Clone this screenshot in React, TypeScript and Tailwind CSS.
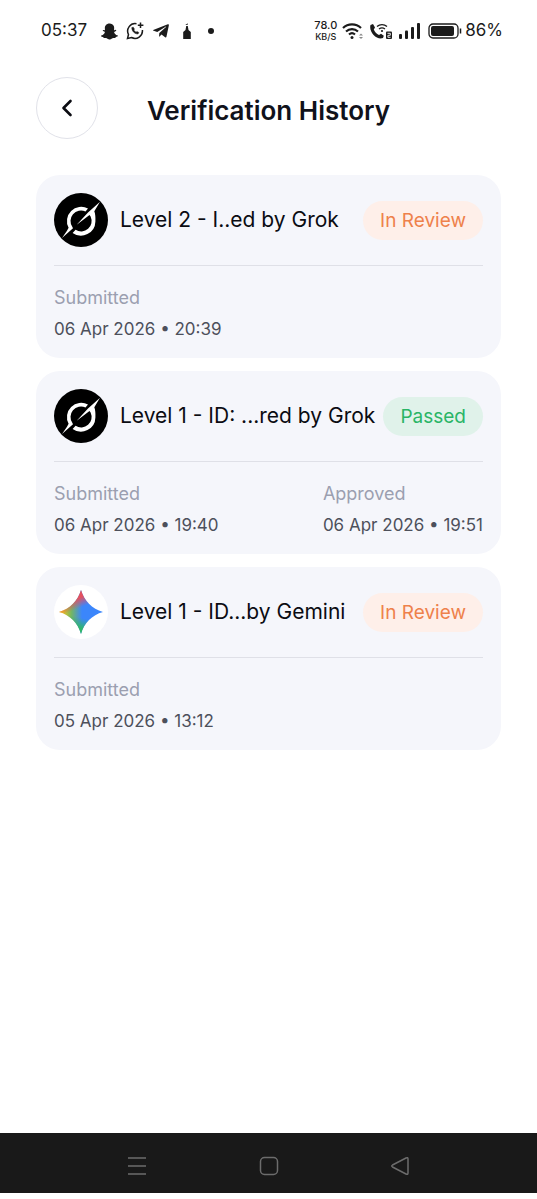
import { ChevronLeft } from "lucide-react";
import { FaSnapchatGhost, FaTelegramPlane } from "react-icons/fa";

type Verification = {
  provider: "grok" | "gemini";
  title: string;
  status: "In Review" | "Passed";
  submitted: string;
  approved?: string;
};

const verifications: Verification[] = [
  { provider: "grok", title: "Level 2 - I..ed by Grok", status: "In Review", submitted: "06 Apr 2026 • 20:39" },
  {
    provider: "grok",
    title: "Level 1 - ID: ...red by Grok",
    status: "Passed",
    submitted: "06 Apr 2026 • 19:40",
    approved: "06 Apr 2026 • 19:51",
  },
  { provider: "gemini", title: "Level 1 - ID...by Gemini", status: "In Review", submitted: "05 Apr 2026 • 13:12" },
];

const GrokLogo = () => (
  <svg viewBox="0 0 54 54" className="size-[54px] shrink-0" aria-hidden="true">
    <circle cx="27" cy="27" r="27" fill="#000" />
    <g fill="#fff">
      <path d="M34 15.500A14.300 14.300 0 0 0 14.600 34.800L13 37.800L8 45L19 35.300L18.400 34A10.500 10.500 0 0 1 31.500 18.500Z" />
      <path d="M22.700 31.700L34 19.500L46 8.800L40.300 18.300C41.300 21 41.600 24 41.400 28.500A14.400 14.400 0 0 1 18.600 39.900L21.600 36.800A10.400 10.400 0 0 0 36.600 23.600L35.500 22Z" />
    </g>
  </svg>
);

const GeminiLogo = () => (
  <svg viewBox="0 0 54 54" className="size-[54px] shrink-0" aria-hidden="true">
    <defs>
      <linearGradient id="gem-base" x1="5" y1="27" x2="28" y2="27" gradientUnits="userSpaceOnUse">
        <stop offset=".15" stopColor="#ecc51c" />
        <stop offset=".55" stopColor="#72b566" />
        <stop offset="1" stopColor="#3b86fb" />
      </linearGradient>
      <linearGradient id="gem-red" x1="23" y1="10" x2="28" y2="22" gradientUnits="userSpaceOnUse">
        <stop offset=".25" stopColor="#e4505f" />
        <stop offset="1" stopColor="#e4505f" stopOpacity="0" />
      </linearGradient>
      <linearGradient id="gem-green" x1="25" y1="46" x2="28" y2="33" gradientUnits="userSpaceOnUse">
        <stop offset=".2" stopColor="#2fb866" />
        <stop offset="1" stopColor="#2fb866" stopOpacity="0" />
      </linearGradient>
    </defs>
    <circle cx="27" cy="27" r="27" fill="#fff" />
    {["url(#gem-base)", "url(#gem-green)", "url(#gem-red)"].map((fill) => (
      <path key={fill} fill={fill} d="M27 5C30 15.500 38 24 49 27C38 30 30 38 27 49C24 38 16 30 5 27C16 24 24 15.500 27 5Z" />
    ))}
  </svg>
);

const StatusBar = () => (
  <div className="flex h-[62px] items-center pl-[41px] pr-[34px] text-[#1b1b1b]">
    <span className="text-[17px]">05:37</span>
    <div className="ml-[14px] flex items-center gap-2">
      <FaSnapchatGhost size={17} />
      <svg viewBox="0 0 18 18" className="size-[18px]" fill="none" stroke="currentColor" strokeWidth="1.5" aria-hidden="true">
        <path d="M10.500 1.700A7.500 7.500 0 0 0 2.500 12.500L1.500 16.500L5.500 15.500A7.500 7.500 0 0 0 16.400 8" />
        <path d="M14.500 .5V6M11.800 3.200H17.400" />
        <path d="M5.800 5.500C5.600 9 8.500 12 12 12L12.800 10.500L11 9.500L10 10.300L7.900 8.200L8.400 7L7.300 5.200Z" fill="currentColor" strokeWidth=".5" />
      </svg>
      <FaTelegramPlane size={18} />
      <svg viewBox="0 0 18 18" className="size-[18px]" fill="currentColor" aria-hidden="true">
        <path d="M7.800 2.200L10 1.500V2.500L7.800 3ZM8.200 4H9.800L10.500 8L12.800 10V17H5.200V10L7.500 8Z" />
      </svg>
      <span className="ml-[4px] size-[6px] rounded-full bg-[#1b1b1b]" />
    </div>
    <div className="ml-auto flex items-center">
      <div className="text-center font-medium">
        <div className="text-[11px] leading-[11px]">78.0</div>
        <div className="text-[9px] leading-[11px]">KB/S</div>
      </div>
      <svg viewBox="0 0 22 18" className="ml-[5px] h-[18px] w-[22px]" fill="none" stroke="currentColor" strokeWidth="2.200" aria-hidden="true">
        <path d="M1 6A13 13 0 0 1 19 6M4 9.500A9 9 0 0 1 16 9.500M7 12.500A4.500 4.500 0 0 1 13 12.500" />
        <circle cx="10" cy="15.500" r="1.500" fill="currentColor" stroke="none" />
        <path d="M17 13.500H21L19 11.500ZM17 15H21L19 17Z" fill="#888" stroke="none" />
      </svg>
      <svg viewBox="0 0 24 18" className="ml-[5px] h-[18px] w-[24px]" fill="currentColor" aria-hidden="true">
        <path d="M1.500 3L4 2L6 5.500L4.800 7.500C5.800 10 7.500 11.800 10 13L12 11.800L14.800 13.800L14 16C8 18.500 -.5 10 1.500 3Z" />
        <path d="M8 4.500A7.500 7.500 0 0 1 18 4.500M10 7A5 5 0 0 1 16 7" fill="none" stroke="currentColor" strokeWidth="1.300" />
        <circle cx="13" cy="9" r="1.100" />
        <rect x="17" y="9.500" width="6" height="7.500" rx="1" />
        <path d="M18.500 11.300H21.300V13.300H18.900V15.300H21.500" fill="none" stroke="#fff" strokeWidth=".9" />
      </svg>
      <svg viewBox="0 0 22 16" className="ml-[6px] h-[16px] w-[22px]" fill="currentColor" aria-hidden="true">
        <rect x="0" y="11" width="3" height="5" rx="1" />
        <rect x="6" y="7.500" width="3" height="8.500" rx="1" />
        <rect x="12" y="4" width="3" height="12" rx="1" />
        <rect x="18" y="0" width="3" height="16" rx="1" />
      </svg>
      <svg viewBox="0 0 34 16" className="ml-[7px] h-[16px] w-[34px]" fill="none" stroke="currentColor" aria-hidden="true">
        <rect x="1" y="1" width="29" height="14" rx="4" strokeWidth="1.300" />
        <rect x="3" y="3" width="23" height="10" rx="2" fill="currentColor" stroke="none" />
        <path d="M32.500 5.500V10.500" strokeWidth="1.500" />
      </svg>
      <span className="ml-[3px] text-[17px]">86%</span>
    </div>
  </div>
);

const DateField = ({ label, value }: { label: string; value: string }) => (
  <div>
    <dt className="text-lg leading-6 text-[#9b9fb0]">{label}</dt>
    <dd className="mt-[7px] text-[17px] leading-6 text-[#4d505b]">{value}</dd>
  </div>
);

const VerificationCard = ({ item }: { item: Verification }) => (
  <li className="rounded-3xl bg-[#f5f6fb] px-[18px] pb-[17px] pt-[18px]">
    <div className="flex items-center pb-[18px]">
      {item.provider === "grok" ? <GrokLogo /> : <GeminiLogo />}
      <h2 className="ml-3 whitespace-nowrap text-[21px] text-[#0b0c12]">{item.title}</h2>
      <span
        className={`ml-auto whitespace-nowrap rounded-full px-[17px] py-[6px] text-[19px] leading-[27px] ${
          item.status === "Passed" ? "bg-[#e0f2ea] text-[#2ab566]" : "bg-[#feefe9] text-[#ee814b]"
        }`}
      >
        {item.status}
      </span>
    </div>
    <dl className="flex justify-between border-t border-[#dfe0e7] pt-5">
      <DateField label="Submitted" value={item.submitted} />
      {item.approved && <DateField label="Approved" value={item.approved} />}
    </dl>
  </li>
);

const NavBar = () => (
  <nav className="mb-[6px] flex h-[60px] items-center justify-between bg-[#191919] px-[125px] pt-[6px] text-[#6c6c6c]">
    <button aria-label="Recent apps">
      <svg viewBox="0 0 24 24" className="size-6" fill="none" stroke="currentColor" strokeWidth="1.500">
        <path d="M3 4H21M3 12H21M3 20H21" />
      </svg>
    </button>
    <button aria-label="Home">
      <svg viewBox="0 0 24 24" className="size-6" fill="none" stroke="currentColor" strokeWidth="1.500">
        <rect x="3.500" y="3.500" width="17" height="17" rx="4" />
      </svg>
    </button>
    <button aria-label="Back">
      <svg viewBox="0 0 24 24" className="size-6" fill="none" stroke="currentColor" strokeWidth="1.500" strokeLinejoin="round">
        <path d="M4.500 11Q3 12 4.500 13L18 20Q20 21 20 19V5Q20 3 18 4Z" />
      </svg>
    </button>
  </nav>
);

const App = () => (
  <div className="flex min-h-screen flex-col bg-white font-['Inter',sans-serif]">
    <StatusBar />
    <header className="mx-9 mt-[15px] grid grid-cols-[62px_1fr_62px] items-center">
      <button
        aria-label="Back"
        className="flex size-[62px] items-center justify-center rounded-full border border-[#e1e2e9] text-[#0b0c12]"
      >
        <ChevronLeft size={28} strokeWidth={2.25} />
      </button>
      <h1 className="pt-1 text-center text-[26px] font-semibold text-[#10121b]">Verification History</h1>
    </header>
    <main className="mx-9 mt-9 flex-1">
      <ul className="space-y-[13px]">
        {verifications.map((item) => (
          <VerificationCard key={item.title} item={item} />
        ))}
      </ul>
    </main>
    <NavBar />
  </div>
);

export default App;
